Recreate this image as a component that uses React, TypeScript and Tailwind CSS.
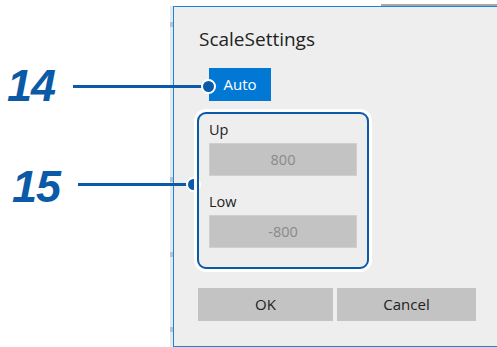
import React from "react";

const App = () => {
  return (
    <div className="relative w-[497px] h-[347px] bg-white overflow-hidden font-['Open_Sans',sans-serif]">
      <div className="flex h-full">
        <div className="w-[170px] shrink-0" />
        <div className="w-[3px] shrink-0 mt-[6px] flex flex-col bg-[#e6e9ec]">
          <div className="h-[16px]" />
          <div className="h-[5px] bg-[#b4c4d0]" />
          <div className="h-[150px]" />
          <div className="h-[5px] bg-[#b4c4d0]" />
          <div className="h-[70px]" />
          <div className="h-[5px] bg-[#b4c4d0]" />
          <div className="h-[70px]" />
          <div className="h-[5px] bg-[#b4c4d0]" />
        </div>
        <div className="flex-1 flex flex-col">
          <div className="h-[4px]" />
          <div className="h-[2px] flex">
            <div className="w-[208px]" />
            <div className="flex-1 bg-[#a8a8a8]" />
          </div>
          <div className="flex-1 bg-[#eeeeee] border-l border-t-[1.5px] border-b-[1.5px] border-[#1c86d6] pl-[25px] flex flex-col">
            <div className="mt-[19px] text-[19px] leading-[26px] text-[#222]">ScaleSettings</div>
            <div className="mt-[16px] ml-[10px] w-[62px] h-[33px] bg-[#0078d4] text-white text-[15px] flex items-center justify-center">
              Auto
            </div>
            <div className="ml-[10px] mt-[19px] w-[148px] flex flex-col">
              <div className="text-[14.5px] leading-[20px] text-[#222]">Up</div>
              <div className="mt-[3px] h-[33px] bg-[#c3c3c3] border border-[#cfcfcf] text-[14.5px] text-[#8a8a8a] flex items-center justify-center">
                800
              </div>
              <div className="mt-[16px] text-[14.5px] leading-[20px] text-[#222]">Low</div>
              <div className="mt-[3px] h-[33px] bg-[#c3c3c3] border border-[#cfcfcf] text-[14.5px] text-[#8a8a8a] flex items-center justify-center">
                -800
              </div>
            </div>
            <div className="mt-[40px] -ml-px flex gap-[4px]">
              <div className="w-[135px] h-[33px] bg-[#c3c3c3] text-[15px] text-[#222] flex items-center justify-center">OK</div>
              <div className="w-[139px] h-[33px] bg-[#c3c3c3] text-[15px] text-[#222] flex items-center justify-center">Cancel</div>
            </div>
          </div>
        </div>
      </div>

      {/* callout 14 */}
      <div className="absolute left-[7px] top-[62px] text-[45px] leading-[48px] font-bold italic text-[#0a5aa8] font-['Liberation_Sans',sans-serif] tracking-[-1px]">
        14
      </div>
      <div className="absolute left-[73px] top-[85px] w-[134px] h-[3px] bg-[#0a5aa8]" />
      <div className="absolute left-[201px] top-[79px] w-[15px] h-[15px] rounded-full bg-[#0a5aa8] border-[2.5px] border-white" />

      {/* callout 15 */}
      <div className="absolute left-[12px] top-[163px] text-[45px] leading-[48px] font-bold italic text-[#0a5aa8] font-['Liberation_Sans',sans-serif] tracking-[-1px]">
        15
      </div>
      <div className="absolute left-[78px] top-[183px] w-[116px] h-[3px] bg-[#0a5aa8]" />
      <div className="absolute left-[186px] top-[177px] w-[15px] h-[15px] rounded-full bg-[#0a5aa8] border-[2.5px] border-white" />

      <div className="absolute left-[197px] top-[112px] w-[172px] h-[157px] rounded-[9px] border-[2.5px] border-[#0a5aa8] shadow-[0_0_0_3px_white]" />
    </div>
  );
};

export default App;
